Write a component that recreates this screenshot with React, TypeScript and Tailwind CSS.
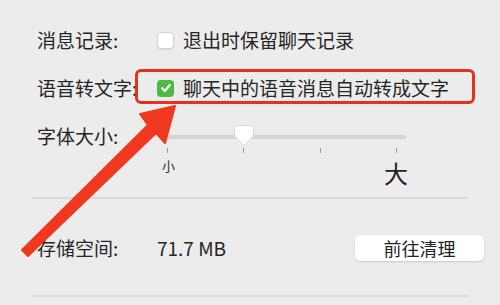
import React from "react";

const font = { fontFamily: '"Noto Sans CJK SC", "Noto Sans", sans-serif' };

function Checkbox({ checked }: { checked?: boolean }) {
  if (checked) {
    return (
      <span className="flex h-[17px] w-[17px] items-center justify-center rounded-[4px] bg-[#4fb946]">
        <svg width="12" height="12" viewBox="0 0 12 12">
          <path d="M2.2 6.3 L4.9 9 L9.8 3" fill="none" stroke="#fff" strokeWidth="2.2" strokeLinecap="round" strokeLinejoin="round" />
        </svg>
      </span>
    );
  }
  return <span className="block h-[17px] w-[17px] rounded-[4px] border border-[#d2d2d2] bg-white shadow-[0_1px_1px_rgba(0,0,0,0.08)]" />;
}

function FontSlider() {
  return (
    <div className="relative h-[60px] w-[260px]">
      {/* track */}
      <div className="absolute left-[10px] top-[14px] h-[4px] w-[239px] rounded-full bg-[#d4d4d4]" />
      {/* thumb */}
      <svg className="absolute left-[76px] top-[3px]" width="22" height="23" viewBox="0 0 22 23">
        <path d="M4 1.5 H18 Q20.5 1.5 20.5 4 V12 L11 21.5 L1.5 12 V4 Q1.5 1.5 4 1.5 Z" fill="#fff" stroke="#cfcfcf" strokeWidth="0.8" />
      </svg>
      {/* ticks */}
      <div className="absolute left-[10px] top-[27px] flex w-[230px] justify-between">
        <span className="block h-[5px] w-px bg-[#9a9a9a]" />
        <span className="block h-[5px] w-px bg-[#9a9a9a]" />
        <span className="block h-[5px] w-px bg-[#9a9a9a]" />
        <span className="block h-[5px] w-px bg-[#9a9a9a]" />
      </div>
      <span className="absolute left-[5px] top-[38px] text-[13px] leading-none text-[#333]">小</span>
      <span className="absolute left-[227px] top-[40px] text-[24px] leading-none text-[#222]">大</span>
    </div>
  );
}

export default function App() {
  return (
    <div className="relative h-[305px] w-[500px] overflow-hidden bg-[#ececec] text-[19px] text-[#262626]" style={font}>
      <div className="pt-[25px]">
        {/* 消息记录 */}
        <div className="flex h-[30px] items-center pl-[37px]">
          <span className="w-[120px]">消息记录:</span>
          <Checkbox />
          <span className="ml-[9px]">退出时保留聊天记录</span>
        </div>

        {/* 语音转文字 */}
        <div className="relative mt-[18px] flex h-[30px] items-center pl-[37px]">
          <span className="w-[120px]">语音转文字:</span>
          <Checkbox checked />
          <span className="ml-[9px]">聊天中的语音消息自动转成文字</span>
          <div className="absolute left-[135px] top-[-4px] h-[35px] w-[340px] rounded-[6px] border-[3px] border-[#e3321f]" />
        </div>

        {/* 字体大小 */}
        <div className="mt-[18px] flex items-start pl-[37px]">
          <span className="flex h-[30px] w-[120px] items-center">字体大小:</span>
          <FontSlider />
        </div>

        <div className="mx-[32px] mt-[16px] h-[2px] bg-[#dadada]" />

        {/* 存储空间 */}
        <div className="mt-[34px] flex h-[30px] items-center pl-[37px] pr-[16px]">
          <span className="w-[120px]">存储空间:</span>
          <span>71.7 MB</span>
          <button className="ml-auto flex h-[26px] w-[129px] items-center justify-center rounded-[6px] bg-white text-[18px] text-[#222] shadow-[0_1px_2px_rgba(0,0,0,0.15)]">
            前往清理
          </button>
        </div>

        <div className="mx-[32px] mt-[32px] h-[2px] bg-[#dadada]" />
      </div>

      {/* annotation arrow */}
      <svg className="pointer-events-none absolute left-0 top-0" width="500" height="305" viewBox="0 0 500 305">
        <polygon
          points="22,250 28,256 156,133 165,143 175,106 140,114 148,125"
          fill="#f0381f"
          stroke="#f0381f"
          strokeWidth="2"
          strokeLinejoin="round"
        />
      </svg>
    </div>
  );
}
